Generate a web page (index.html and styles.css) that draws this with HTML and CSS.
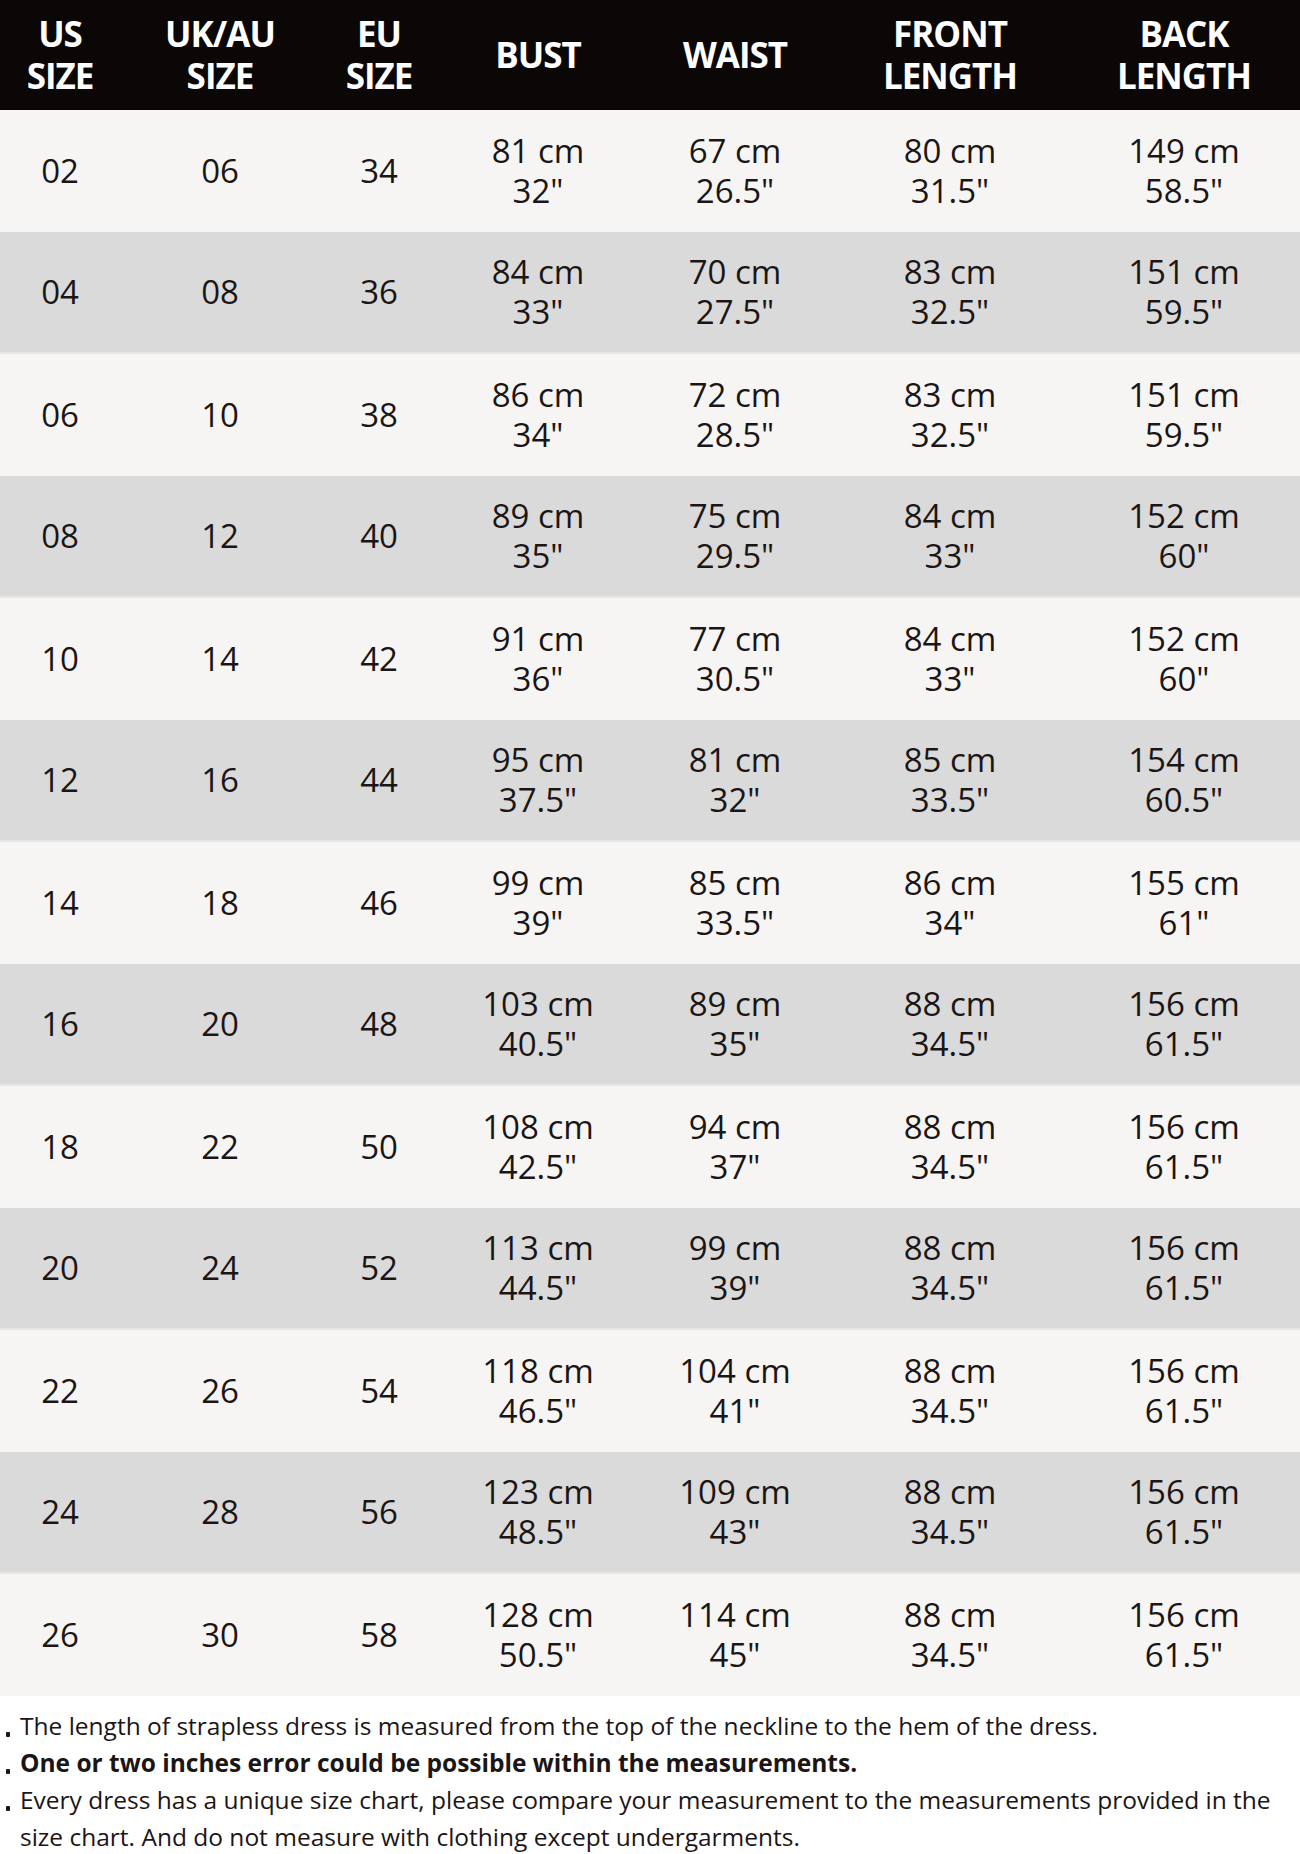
FILE: index.html
```html
<!DOCTYPE html>
<html lang="en">
<head>
<meta charset="utf-8">
<title>Size Chart</title>
<link rel="stylesheet" href="styles.css">
</head>
<body>
<div class="chart">
  <div class="row head">
    <div class="cell">US<br>SIZE</div>
    <div class="cell">UK/AU<br>SIZE</div>
    <div class="cell">EU<br>SIZE</div>
    <div class="cell">BUST</div>
    <div class="cell">WAIST</div>
    <div class="cell">FRONT<br>LENGTH</div>
    <div class="cell">BACK<br>LENGTH</div>
  </div>
  <div class="row light"><div class="cell">02</div><div class="cell">06</div><div class="cell">34</div><div class="cell">81 cm<br>32"</div><div class="cell">67 cm<br>26.5"</div><div class="cell">80 cm<br>31.5"</div><div class="cell">149 cm<br>58.5"</div></div>
  <div class="row dark"><div class="cell">04</div><div class="cell">08</div><div class="cell">36</div><div class="cell">84 cm<br>33"</div><div class="cell">70 cm<br>27.5"</div><div class="cell">83 cm<br>32.5"</div><div class="cell">151 cm<br>59.5"</div></div>
  <div class="row light"><div class="cell">06</div><div class="cell">10</div><div class="cell">38</div><div class="cell">86 cm<br>34"</div><div class="cell">72 cm<br>28.5"</div><div class="cell">83 cm<br>32.5"</div><div class="cell">151 cm<br>59.5"</div></div>
  <div class="row dark"><div class="cell">08</div><div class="cell">12</div><div class="cell">40</div><div class="cell">89 cm<br>35"</div><div class="cell">75 cm<br>29.5"</div><div class="cell">84 cm<br>33"</div><div class="cell">152 cm<br>60"</div></div>
  <div class="row light"><div class="cell">10</div><div class="cell">14</div><div class="cell">42</div><div class="cell">91 cm<br>36"</div><div class="cell">77 cm<br>30.5"</div><div class="cell">84 cm<br>33"</div><div class="cell">152 cm<br>60"</div></div>
  <div class="row dark"><div class="cell">12</div><div class="cell">16</div><div class="cell">44</div><div class="cell">95 cm<br>37.5"</div><div class="cell">81 cm<br>32"</div><div class="cell">85 cm<br>33.5"</div><div class="cell">154 cm<br>60.5"</div></div>
  <div class="row light"><div class="cell">14</div><div class="cell">18</div><div class="cell">46</div><div class="cell">99 cm<br>39"</div><div class="cell">85 cm<br>33.5"</div><div class="cell">86 cm<br>34"</div><div class="cell">155 cm<br>61"</div></div>
  <div class="row dark"><div class="cell">16</div><div class="cell">20</div><div class="cell">48</div><div class="cell">103 cm<br>40.5"</div><div class="cell">89 cm<br>35"</div><div class="cell">88 cm<br>34.5"</div><div class="cell">156 cm<br>61.5"</div></div>
  <div class="row light"><div class="cell">18</div><div class="cell">22</div><div class="cell">50</div><div class="cell">108 cm<br>42.5"</div><div class="cell">94 cm<br>37"</div><div class="cell">88 cm<br>34.5"</div><div class="cell">156 cm<br>61.5"</div></div>
  <div class="row dark"><div class="cell">20</div><div class="cell">24</div><div class="cell">52</div><div class="cell">113 cm<br>44.5"</div><div class="cell">99 cm<br>39"</div><div class="cell">88 cm<br>34.5"</div><div class="cell">156 cm<br>61.5"</div></div>
  <div class="row light"><div class="cell">22</div><div class="cell">26</div><div class="cell">54</div><div class="cell">118 cm<br>46.5"</div><div class="cell">104 cm<br>41"</div><div class="cell">88 cm<br>34.5"</div><div class="cell">156 cm<br>61.5"</div></div>
  <div class="row dark"><div class="cell">24</div><div class="cell">28</div><div class="cell">56</div><div class="cell">123 cm<br>48.5"</div><div class="cell">109 cm<br>43"</div><div class="cell">88 cm<br>34.5"</div><div class="cell">156 cm<br>61.5"</div></div>
  <div class="row light"><div class="cell">26</div><div class="cell">30</div><div class="cell">58</div><div class="cell">128 cm<br>50.5"</div><div class="cell">114 cm<br>45"</div><div class="cell">88 cm<br>34.5"</div><div class="cell">156 cm<br>61.5"</div></div>
</div>
<ul class="notes">
  <li>The length of strapless dress is measured from the top of the neckline to the hem of the dress.</li>
  <li class="strong">One or two inches error could be possible within the measurements.</li>
  <li>Every dress has a unique size chart, please compare your measurement to the measurements provided in the size chart. And do not measure with clothing except undergarments.</li>
</ul>
</body>
</html>
```
FILE: styles.css
```css
* { box-sizing: border-box; }
html, body { margin: 0; padding: 0; background: #ffffff; }
body {
  width: 1300px;
  font-family: "Open Sans", "Noto Sans", sans-serif;
  color: #1b1516;
}
.chart { display: flex; flex-direction: column; }
.row {
  display: grid;
  grid-template-columns: 120px 200px 118px 200px 194px 236px 232px;
  height: 122px;
}
.row.head { height: 110px; background: #0b0707; }
.row.light { background: #f6f5f3; }
.row.dark { background: #d9dad9; border-bottom: 2px solid #e6e6e4; }
.cell {
  display: flex;
  align-items: center;
  justify-content: center;
  text-align: center;
  font-size: 33px;
  line-height: 40px;
}
.head .cell {
  color: #ffffff;
  font-weight: 700;
  font-size: 35px;
  line-height: 42px;
  letter-spacing: -1px;
}
.notes {
  list-style: none;
  margin: 0;
  padding: 11px 20px 0 20px;
  font-size: 24.5px;
  line-height: 37px;
  color: #1b1516;
}
.notes li { position: relative; }
.notes li::before {
  content: "";
  position: absolute;
  left: -14px;
  top: 25px;
  width: 4px;
  height: 5px;
  background: #1b1516;
  border-radius: 1px;
}
.notes li.strong { font-weight: 700; }
```
